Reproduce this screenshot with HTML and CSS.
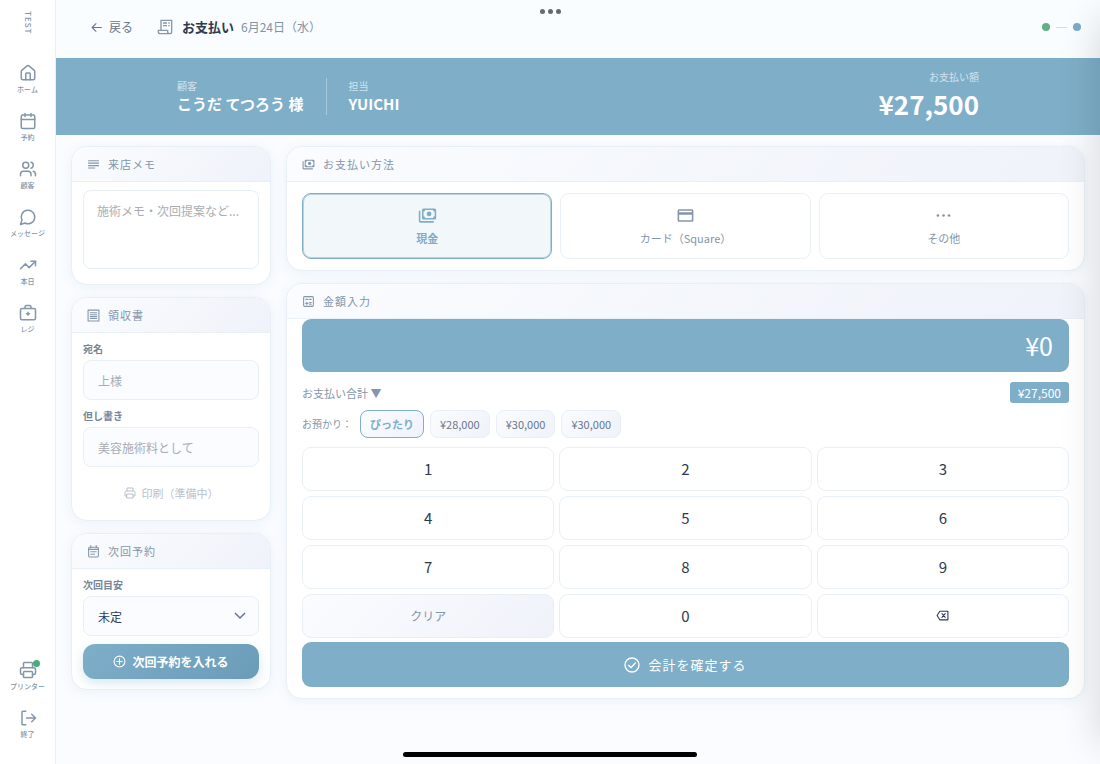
FILE: index.html
```html
<!DOCTYPE html>
<html lang="ja">

<head>
    <meta charset="UTF-8">
    <meta name="viewport" content="width=device-width, initial-scale=1.0">
    <title>お支払い</title>
    <link rel="stylesheet" href="styles.css">
</head>

<body>
    <div class="app">
        <!-- サイドバー -->
        <nav class="sidebar">
            <span class="brand">TEST</span>
            <a class="nav-item" href="#">
                <svg class="line-icon" viewBox="0 0 24 24"><path d="M15 21v-8a1 1 0 0 0-1-1h-4a1 1 0 0 0-1 1v8"/><path d="M3 10a2 2 0 0 1 .7-1.5l7-6a2 2 0 0 1 2.6 0l7 6A2 2 0 0 1 21 10v9a2 2 0 0 1-2 2H5a2 2 0 0 1-2-2z"/></svg>
                <span>ホーム</span>
            </a>
            <a class="nav-item" href="#">
                <svg class="line-icon" viewBox="0 0 24 24"><path d="M8 2v4M16 2v4M3 10h18"/><rect x="3" y="4" width="18" height="18" rx="2"/></svg>
                <span>予約</span>
            </a>
            <a class="nav-item" href="#">
                <svg class="line-icon" viewBox="0 0 24 24"><path d="M16 21v-2a4 4 0 0 0-4-4H6a4 4 0 0 0-4 4v2"/><circle cx="9" cy="7" r="4"/><path d="M22 21v-2a4 4 0 0 0-3-3.87M16 3.13a4 4 0 0 1 0 7.75"/></svg>
                <span>顧客</span>
            </a>
            <a class="nav-item" href="#">
                <svg class="line-icon" viewBox="0 0 24 24"><path d="M7.9 20A9 9 0 1 0 4 16.1L2 22Z"/></svg>
                <span>メッセージ</span>
            </a>
            <a class="nav-item" href="#">
                <svg class="line-icon" viewBox="0 0 24 24"><path d="m22 7-8.5 8.5-5-5L2 17"/><path d="M16 7h6v6"/></svg>
                <span>本日</span>
            </a>
            <a class="nav-item" href="#">
                <svg class="line-icon" viewBox="0 0 24 24"><path d="M12 11v4M14 13h-4"/><path d="M16 6V4a2 2 0 0 0-2-2h-4a2 2 0 0 0-2 2v2"/><rect x="2" y="6" width="20" height="15" rx="2"/></svg>
                <span>レジ</span>
            </a>
            <a class="nav-item nav-bottom" href="#">
                <svg class="line-icon" viewBox="0 0 24 24"><path d="M6 18H4a2 2 0 0 1-2-2v-5a2 2 0 0 1 2-2h16a2 2 0 0 1 2 2v5a2 2 0 0 1-2 2h-2"/><path d="M6 9V3a1 1 0 0 1 1-1h10a1 1 0 0 1 1 1v6"/><rect x="6" y="14" width="12" height="8" rx="1"/></svg>
                <i class="online"></i>
                <span>プリンター</span>
            </a>
            <a class="nav-item" href="#">
                <svg class="line-icon" viewBox="0 0 24 24"><path d="M9 3H5a1 1 0 0 0-1 1v16a1 1 0 0 0 1 1h4"/><path d="m17 17 5-5-5-5M22 12H10"/></svg>
                <span>終了</span>
            </a>
        </nav>

        <div class="page">
            <header class="topbar">
                <a class="back" href="#">
                    <svg class="line-icon" viewBox="0 0 24 24"><path d="m11 5-7 7 7 7M4 12h17"/></svg>
                    戻る
                </a>
                <svg class="title-icon" viewBox="0 0 24 24"><path d="M6 17V2h16v17a3 3 0 0 1-6 0v-2H2v2a3 3 0 0 0 3 3h14"/><path d="M9 6h6M9 10h6M17 6h2M17 10h2"/></svg>
                <h1>お支払い</h1>
                <span class="date">6月24日（水）</span>
                <div class="status"><i class="dot dot-green"></i><i class="bar"></i><i class="dot"></i></div>
            </header>

            <!-- お客様情報 -->
            <section class="summary">
                <div class="summary-inner">
                    <div class="info">
                        <span class="caption">顧客</span>
                        <strong>こうだ てつろう 様</strong>
                    </div>
                    <div class="info info-staff">
                        <span class="caption">担当</span>
                        <strong>YUICHI</strong>
                    </div>
                    <div class="info info-total">
                        <span class="caption">お支払い額</span>
                        <strong class="total">¥27,500</strong>
                    </div>
                </div>
            </section>

            <main class="content">
                <div class="column">
                    <section class="card">
                        <h2 class="card-head">
                            <svg class="fill-icon" viewBox="0 0 24 24"><path d="M2 4h20v2H2zM2 8.500h20v2H2zM2 13h20v2H2zM2 17.500h13v2H2z"/></svg>
                            <label for="memo">来店メモ</label>
                        </h2>
                        <div class="card-body">
                            <textarea class="memo" id="memo" placeholder="施術メモ・次回提案など..."></textarea>
                        </div>
                    </section>

                    <section class="card">
                        <h2 class="card-head">
                            <svg class="line-icon" viewBox="0 0 24 24"><path d="M2 2h20v20H2z"/><path d="M6 7h12M6 10.500h12M6 14h12M6 17.500h12"/></svg>
                            領収書
                        </h2>
                        <div class="card-body">
                            <div class="field">
                                <label for="name">宛名</label>
                                <input class="control" type="text" id="name" placeholder="上様">
                            </div>
                            <div class="field">
                                <label for="note">但し書き</label>
                                <input class="control" type="text" id="note" placeholder="美容施術料として">
                            </div>
                            <button class="print" type="button" disabled>
                                <svg class="line-icon" viewBox="0 0 24 24"><path d="M6 18H2v-7a3 3 0 0 1 3-3h14a3 3 0 0 1 3 3v7h-4"/><path d="M6 8V2h12v6M6 14h12v8H6z"/></svg>
                                印刷（準備中）
                            </button>
                        </div>
                    </section>

                    <section class="card">
                        <h2 class="card-head">
                            <svg class="line-icon" viewBox="0 0 24 24"><rect x="3" y="4" width="18" height="18" rx="2"/><path d="M3 8h18M7 1v4M17 1v4M7 12.500h10M7 17h7"/></svg>
                            次回予約
                        </h2>
                        <div class="card-body">
                            <div class="field">
                                <label for="next">次回目安</label>
                                <div class="select-wrap">
                                    <select class="control" id="next">
                                        <option>未定</option>
                                    </select>
                                    <svg class="chevron" viewBox="0 0 12 8"><path d="m1 1 5 5 5-5"/></svg>
                                </div>
                            </div>
                            <button class="reserve" type="button">
                                <svg class="line-icon" viewBox="0 0 24 24"><circle cx="12" cy="12" r="10"/><path d="M12 7v10M7 12h10"/></svg>
                                次回予約を入れる
                            </button>
                        </div>
                    </section>
                </div>

                <div class="column">
                    <section class="card">
                        <h2 class="card-head">
                            <svg class="fill-icon" viewBox="0 0 24 24"><path d="M7 3h14a2 2 0 0 1 2 2v10a2 2 0 0 1-2 2H7a2 2 0 0 1-2-2V5a2 2 0 0 1 2-2zm2 2a2 2 0 0 1-2 2v6a2 2 0 0 1 2 2h10a2 2 0 0 1 2-2V7a2 2 0 0 1-2-2z"/><circle cx="14" cy="10" r="3"/><path d="M1 6h2v13h17v2H3a2 2 0 0 1-2-2z"/></svg>
                            お支払い方法
                        </h2>
                        <div class="methods">
                            <button class="method active" type="button">
                                <svg class="fill-icon" viewBox="0 0 24 24"><path d="M7 3h14a2 2 0 0 1 2 2v10a2 2 0 0 1-2 2H7a2 2 0 0 1-2-2V5a2 2 0 0 1 2-2zm2 2a2 2 0 0 1-2 2v6a2 2 0 0 1 2 2h10a2 2 0 0 1 2-2V7a2 2 0 0 1-2-2z"/><circle cx="14" cy="10" r="3"/><path d="M1 6h2v13h17v2H3a2 2 0 0 1-2-2z"/></svg>
                                現金
                            </button>
                            <button class="method" type="button">
                                <svg class="fill-icon" viewBox="0 0 24 24"><path d="M20 4H4c-1.110 0-1.990.89-1.990 2L2 18c0 1.110.89 2 2 2h16c1.110 0 2-.89 2-2V6c0-1.110-.89-2-2-2zm0 14H4v-7h16v7zm0-10H4V6h16v2z"/></svg>
                                カード（Square）
                            </button>
                            <button class="method" type="button">
                                <svg class="fill-icon" viewBox="0 0 24 24"><circle cx="5" cy="12" r="1.700"/><circle cx="12" cy="12" r="1.700"/><circle cx="19" cy="12" r="1.700"/></svg>
                                その他
                            </button>
                        </div>
                    </section>

                    <section class="card">
                        <h2 class="card-head">
                            <svg class="line-icon" viewBox="0 0 24 24"><rect x="3" y="3" width="18" height="18" rx="2"/><path d="M7 8h4M14 8h3M7 15.500h4M9 13.500v4M14 14h3M14 17h3"/></svg>
                            金額入力
                        </h2>
                        <div class="entry">
                            <output class="display">¥0</output>
                            <div class="total-row">
                                <span>お支払い合計 ▼</span>
                                <span class="badge">¥27,500</span>
                            </div>
                            <div class="quick">
                                <span class="quick-label">お預かり：</span>
                                <button class="chip active" type="button">ぴったり</button>
                                <button class="chip" type="button">¥28,000</button>
                                <button class="chip" type="button">¥30,000</button>
                                <button class="chip" type="button">¥30,000</button>
                            </div>
                            <div class="keypad">
                                <button class="key" type="button">1</button>
                                <button class="key" type="button">2</button>
                                <button class="key" type="button">3</button>
                                <button class="key" type="button">4</button>
                                <button class="key" type="button">5</button>
                                <button class="key" type="button">6</button>
                                <button class="key" type="button">7</button>
                                <button class="key" type="button">8</button>
                                <button class="key" type="button">9</button>
                                <button class="key key-clear" type="button">クリア</button>
                                <button class="key" type="button">0</button>
                                <button class="key" type="button" aria-label="1文字削除">
                                    <svg class="line-icon" viewBox="0 0 24 24"><path d="M7 4h15v16H7l-5-8z"/><path d="m11 8.500 6 7M17 8.500l-6 7"/></svg>
                                </button>
                            </div>
                            <button class="confirm" type="button">
                                <svg class="line-icon" viewBox="0 0 24 24"><circle cx="12" cy="12" r="10.500"/><path d="m7 12.500 3.500 3.500 6.500-7"/></svg>
                                会計を確定する
                            </button>
                        </div>
                    </section>
                </div>
            </main>
        </div>
    </div>

    <!-- タブレットの表示 -->
    <div class="multitask"><i></i><i></i><i></i></div>
    <div class="home-bar"></div>
    <div class="edge-shade"></div>
</body>

</html>
```
FILE: styles.css
```css
* {
    box-sizing: border-box;
}

body {
    margin: 0;
    background: #fafcff;
    color: #2d3a50;
    font-family: "Noto Sans CJK JP", sans-serif;
    font-size: 11px;
    line-height: 16px;
    overflow-x: hidden;
}

button,
input,
select,
textarea {
    font-family: inherit;
    margin: 0;
}

button {
    cursor: pointer;
}

a {
    color: inherit;
    text-decoration: none;
}

h1,
h2 {
    margin: 0;
}

svg {
    display: block;
    flex: none;
}

.line-icon {
    fill: none;
    stroke: currentColor;
    stroke-width: 2;
    stroke-linecap: round;
    stroke-linejoin: round;
}

.fill-icon {
    fill: currentColor;
}

.app {
    display: flex;
    min-height: 100vh;
}

/* サイドバー */
.sidebar {
    display: flex;
    flex-direction: column;
    align-items: center;
    flex: none;
    width: 56px;
    padding: 11px 0 16px;
    background: #fff;
    border-right: 1px solid #ebeff8;
    color: #8496aa;
}

.brand {
    height: 27px;
    margin-bottom: 17px;
    writing-mode: vertical-rl;
    font-size: 8px;
    font-weight: 500;
    line-height: 12px;
    letter-spacing: 1px;
}

.nav-item {
    position: relative;
    display: flex;
    flex-direction: column;
    align-items: center;
    justify-content: center;
    gap: 2px;
    width: 100%;
    height: 48px;
    font-size: 7px;
    font-weight: 500;
    line-height: 10px;
}

.nav-item svg {
    width: 18px;
    height: 18px;
}

.nav-bottom {
    margin-top: auto;
}

.online {
    position: absolute;
    top: 8px;
    left: 33px;
    width: 7px;
    height: 7px;
    border-radius: 50%;
    background: #48ad78;
}

/* ヘッダー */
.page {
    flex: 1;
    min-width: 0;
}

.topbar {
    display: flex;
    align-items: center;
    height: 58px;
    padding: 0 19px 4px 34px;
    background: #fafdff;
}

.back {
    display: flex;
    align-items: center;
    gap: 6px;
    margin-right: 24px;
    color: #66758b;
    font-size: 12px;
}

.back svg {
    width: 13px;
    height: 13px;
}

.title-icon {
    width: 16px;
    height: 16px;
    margin-right: 9px;
    fill: none;
    stroke: #8597a9;
    stroke-width: 2;
}

.topbar h1 {
    font-size: 13px;
    font-weight: 700;
}

.date {
    margin-left: 7px;
    color: #8292a8;
    font-size: 12px;
}

.status {
    display: flex;
    align-items: center;
    gap: 6px;
    margin-left: auto;
}

.dot {
    width: 8px;
    height: 8px;
    border-radius: 50%;
    background: #7badc8;
}

.dot-green {
    background: #62b083;
}

.bar {
    width: 11px;
    height: 1px;
    background: #d5dce5;
}

.summary {
    padding: 12px 20px;
    background: #7eaec8;
    color: #fff;
}

.summary-inner {
    display: flex;
    align-items: center;
    max-width: 802px;
    height: 53px;
    margin: 0 auto;
}

.info {
    display: flex;
    flex-direction: column;
    font-size: 15px;
    line-height: 22px;
}

.info-staff {
    margin-left: 22px;
    padding-left: 22px;
    border-left: 1px solid #a8c9dc;
}

.info-total {
    align-items: flex-end;
    margin-left: auto;
}

.caption {
    color: #d2e3ed;
    font-size: 10px;
    line-height: 15px;
}

.total {
    font-size: 26px;
    line-height: 40px;
}

/* カード */
.content {
    display: grid;
    grid-template-columns: 200px minmax(0, 1fr);
    gap: 15px;
    align-items: start;
    padding: 11px 15px 40px;
}

.column {
    display: flex;
    flex-direction: column;
    gap: 12px;
}

.card {
    overflow: hidden;
    border: 1px solid #e9eff7;
    border-radius: 16px;
    background: #fff;
    box-shadow: 0 2px 12px rgba(126, 174, 200, 0.12);
}

.card-head {
    display: flex;
    align-items: center;
    gap: 8px;
    height: 35px;
    padding: 0 15px;
    border-bottom: 1px solid #e9eff7;
    background: linear-gradient(135deg, #fafcff, #eff2f9);
    color: #8496aa;
    font-size: 11px;
    font-weight: 400;
    letter-spacing: 1px;
}

.card-head svg {
    width: 13px;
    height: 13px;
}

.card-body {
    display: flex;
    flex-direction: column;
    gap: 8px;
    padding: 8px 11px 10px;
}

.memo {
    height: 79px;
    margin-bottom: 5px;
    padding: 11px 13px;
    border: 1px solid #e5edf7;
    border-radius: 8px;
    background: #fff;
    color: #2d3a50;
    font-size: 12px;
    line-height: 18px;
    resize: none;
}

::placeholder {
    color: #a9adb3;
}

.field {
    display: flex;
    flex-direction: column;
    gap: 3px;
}

.field label {
    color: #74869a;
    font-size: 10px;
    font-weight: 700;
}

.control {
    width: 100%;
    height: 40px;
    padding: 0 14px;
    border: 1px solid #e9eff7;
    border-radius: 8px;
    background: #fafcff;
    color: #2d3a50;
    font-size: 12px;
    appearance: none;
}

.select-wrap {
    position: relative;
}

.chevron {
    position: absolute;
    top: 16px;
    right: 13px;
    width: 12px;
    height: 8px;
    fill: none;
    stroke: #66758b;
    stroke-width: 1.5;
    pointer-events: none;
}

.print,
.reserve,
.confirm {
    display: flex;
    align-items: center;
    justify-content: center;
    gap: 6px;
    height: 35px;
    padding: 0;
    border: 0;
}

.print {
    background: none;
    color: #b9c1cc;
    font-size: 11px;
}

.print svg {
    width: 12px;
    height: 12px;
}

.reserve {
    border-radius: 12px;
    background: linear-gradient(135deg, #7eaec8, #6a9cb8);
    box-shadow: 0 4px 12px rgba(126, 174, 200, 0.3);
    color: #fff;
    font-size: 12px;
    font-weight: 700;
}

.reserve svg {
    width: 13px;
    height: 13px;
}

/* お支払い方法 */
.methods {
    display: grid;
    grid-template-columns: repeat(3, 1fr);
    gap: 8px;
    padding: 11px 15px;
}

.method {
    display: flex;
    flex-direction: column;
    align-items: center;
    justify-content: center;
    gap: 5px;
    height: 66px;
    padding: 0;
    border: 1px solid #e9eff7;
    border-radius: 9px;
    background: #fff;
    color: #8496aa;
    font-size: 11px;
    line-height: 16px;
}

.method svg {
    width: 19px;
    height: 19px;
}

.method.active {
    border-color: #7eaec8;
    background: #f2f7fa;
    box-shadow: inset 0 0 0 1px rgba(126, 174, 200, 0.5);
    color: #7eaec8;
    font-weight: 700;
}

/* 金額入力 */
.entry {
    padding: 0 15px 11px;
}

.display {
    display: block;
    padding: 0 16px;
    border-radius: 9px;
    background: #7eaec8;
    color: #fff;
    font-size: 25px;
    line-height: 53px;
    text-align: right;
}

.total-row {
    display: flex;
    align-items: center;
    justify-content: space-between;
    margin-top: 10px;
    color: #8496aa;
}

.badge {
    padding: 0 8px;
    border-radius: 3px;
    background: #7eaec8;
    color: #fff;
    font-size: 12px;
    line-height: 21px;
}

.quick {
    display: flex;
    align-items: center;
    gap: 6px;
    margin: 7px 0 9px;
    color: #8496aa;
}

.quick-label {
    margin-right: 2px;
    font-size: 10px;
}

.chip {
    height: 28px;
    padding: 0 9px;
    border: 1px solid #e9eff7;
    border-radius: 8px;
    background: linear-gradient(135deg, #fafcff, #eff2f9);
    color: #66758b;
    font-size: 11px;
}

.chip.active {
    border-color: #7eaec8;
    color: #7eaec8;
    font-weight: 700;
}

.keypad {
    display: grid;
    grid-template-columns: repeat(3, 1fr);
    grid-auto-rows: 44px;
    gap: 5px;
}

.key {
    display: flex;
    align-items: center;
    justify-content: center;
    padding: 0 0 2px;
    border: 1px solid #e9eff7;
    border-radius: 9px;
    background: #fff;
    color: #2d3a50;
    font-size: 15px;
}

.key svg {
    width: 13px;
    height: 13px;
}

.key-clear {
    background: linear-gradient(135deg, #fafcff, #eff2f9);
    color: #8496aa;
    font-size: 12px;
}

.confirm {
    gap: 8px;
    width: 100%;
    height: 45px;
    margin-top: 4px;
    border-radius: 9px;
    background: #7eaec8;
    color: #fff;
    font-size: 13px;
    letter-spacing: 1px;
}

.confirm svg {
    width: 16px;
    height: 16px;
}

/* タブレットの表示 */
.multitask {
    position: fixed;
    top: 9px;
    left: 0;
    right: 0;
    display: flex;
    justify-content: center;
    gap: 3px;
}

.multitask i {
    width: 5px;
    height: 5px;
    border-radius: 50%;
    background: #66696d;
}

.home-bar {
    position: fixed;
    bottom: 7px;
    left: 50%;
    width: 294px;
    height: 5px;
    margin-left: -147px;
    border-radius: 3px;
    background: #000;
}

.edge-shade {
    position: fixed;
    top: 20px;
    bottom: 20px;
    left: 100%;
    width: 60px;
    box-shadow: 0 0 40px rgba(0, 0, 0, 0.16);
    pointer-events: none;
}
```
